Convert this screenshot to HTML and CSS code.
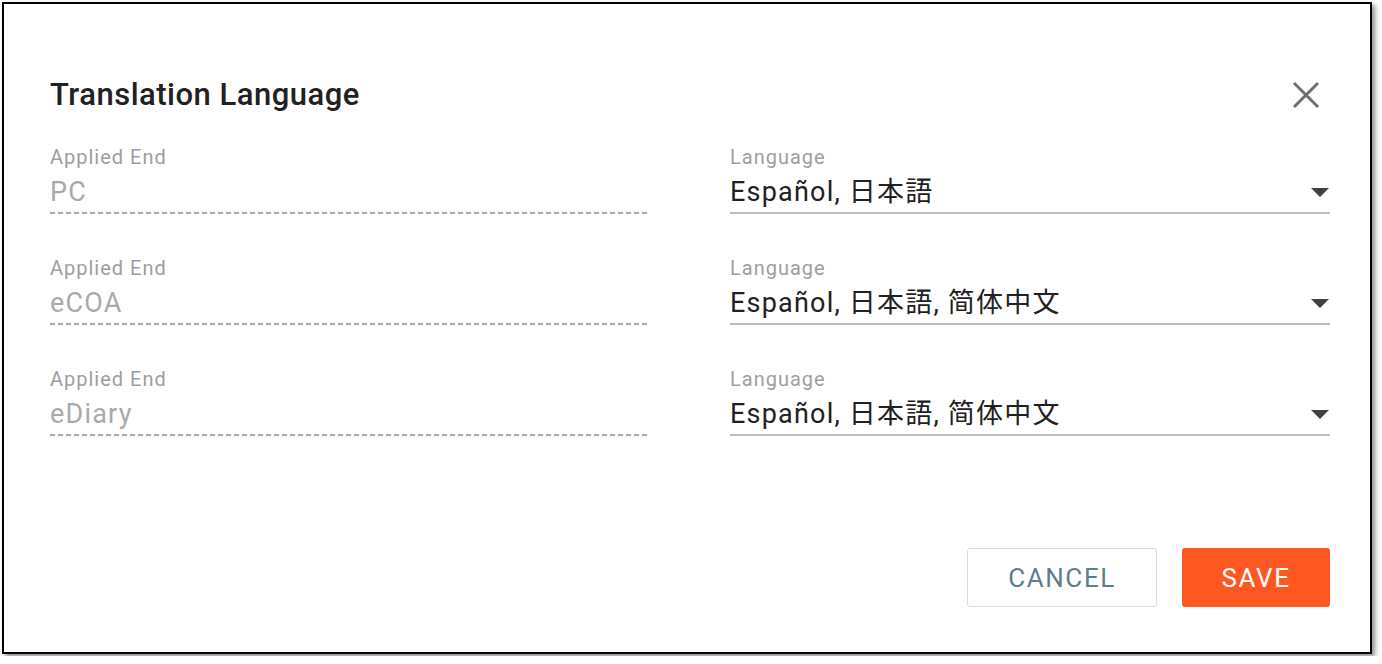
FILE: index.html
```html
<!DOCTYPE html>
<html lang="en">
<head>
  <meta charset="UTF-8">
  <title>Translation Language</title>
  <link rel="stylesheet" href="styles.css">
</head>
<body>

<!-- Translation language dialog -->
<div class="dialog">
  <div class="dialog-header">
    <h2 class="dialog-title">Translation Language</h2>
    <button class="close-btn" aria-label="Close">
      <svg width="28" height="28" viewBox="0 0 28 28">
        <path d="M2 2L26 26M26 2L2 26" stroke="#6e6e6e" stroke-width="3" fill="none"/>
      </svg>
    </button>
  </div>

  <div class="dialog-body">
    <div class="form-row">
      <div class="field">
        <label class="field-label">Applied End</label>
        <div class="field-value disabled">PC</div>
      </div>
      <div class="field">
        <label class="field-label">Language</label>
        <div class="field-value select">
          <span>Español, 日本語</span>
          <span class="select-arrow"></span>
        </div>
      </div>
    </div>

    <div class="form-row">
      <div class="field">
        <label class="field-label">Applied End</label>
        <div class="field-value disabled">eCOA</div>
      </div>
      <div class="field">
        <label class="field-label">Language</label>
        <div class="field-value select">
          <span>Español, 日本語, 简体中文</span>
          <span class="select-arrow"></span>
        </div>
      </div>
    </div>

    <div class="form-row">
      <div class="field">
        <label class="field-label">Applied End</label>
        <div class="field-value disabled">eDiary</div>
      </div>
      <div class="field">
        <label class="field-label">Language</label>
        <div class="field-value select">
          <span>Español, 日本語, 简体中文</span>
          <span class="select-arrow"></span>
        </div>
      </div>
    </div>
  </div>

  <div class="dialog-actions">
    <button class="btn btn-cancel">CANCEL</button>
    <button class="btn btn-save">SAVE</button>
  </div>
</div>

</body>
</html>
```

FILE: styles.css
```css
/* Page + dialog frame */
body {
  margin: 0;
  background: #fff;
  font-family: Roboto, "Noto Sans CJK JP", sans-serif;
}

.dialog {
  box-sizing: border-box;
  width: 1370px;
  height: 652px;
  margin: 2px;
  border: 2px solid #000;
  background: #fff;
  box-shadow: 3px 3px 5px rgba(0, 0, 0, 0.45);
  padding: 75px 40px 45px 46px;
  display: flex;
  flex-direction: column;
}

/* Header */
.dialog-header {
  display: flex;
  align-items: center;
  justify-content: space-between;
  height: 32px;
}

.dialog-title {
  margin: 0;
  font-size: 31px;
  font-weight: 500;
  line-height: 32px;
  letter-spacing: 0.5px;
  color: #212121;
}

.close-btn {
  border: none;
  background: none;
  padding: 0;
  margin-right: 10px;
  width: 28px;
  height: 28px;
  cursor: pointer;
}

/* Form rows */
.dialog-body {
  margin-top: 35px;
}

.form-row {
  display: grid;
  grid-template-columns: 600px 600px;
  column-gap: 80px;
  margin-bottom: 43px;
}

.field-label {
  display: block;
  font-size: 20px;
  line-height: 22px;
  color: #9e9e9e;
  letter-spacing: 1px;
}

.field-value {
  margin-top: 8px;
  font-size: 27px;
  line-height: 32px;
  padding-bottom: 4px;
  letter-spacing: 1.2px;
}

.field-value.disabled {
  color: #aaa;
  background-image: linear-gradient(to right, #aaa 5px, transparent 5px);
  background-size: 8px 2px;
  background-repeat: repeat-x;
  background-position: right bottom;
  padding-bottom: 6px;
}

.field-value.select {
  display: flex;
  align-items: center;
  justify-content: space-between;
  color: #212121;
  border-bottom: 2px solid #bdbdbd;
}

.select-arrow {
  width: 0;
  height: 0;
  margin-right: 1px;
  border-left: 9px solid transparent;
  border-right: 9px solid transparent;
  border-top: 9px solid #424242;
}

/* Buttons */
.dialog-actions {
  margin-top: auto;
  display: flex;
  justify-content: flex-end;
  gap: 25px;
}

.btn {
  height: 59px;
  font-family: Roboto, sans-serif;
  font-size: 26px;
  letter-spacing: 1.6px;
  border-radius: 3px;
  cursor: pointer;
}

.btn-cancel {
  width: 190px;
  background: #fff;
  color: #607d8b;
  border: 1px solid #dcdcdc;
}

.btn-save {
  width: 148px;
  background: #ff5722;
  color: #fff;
  border: none;
}
```
